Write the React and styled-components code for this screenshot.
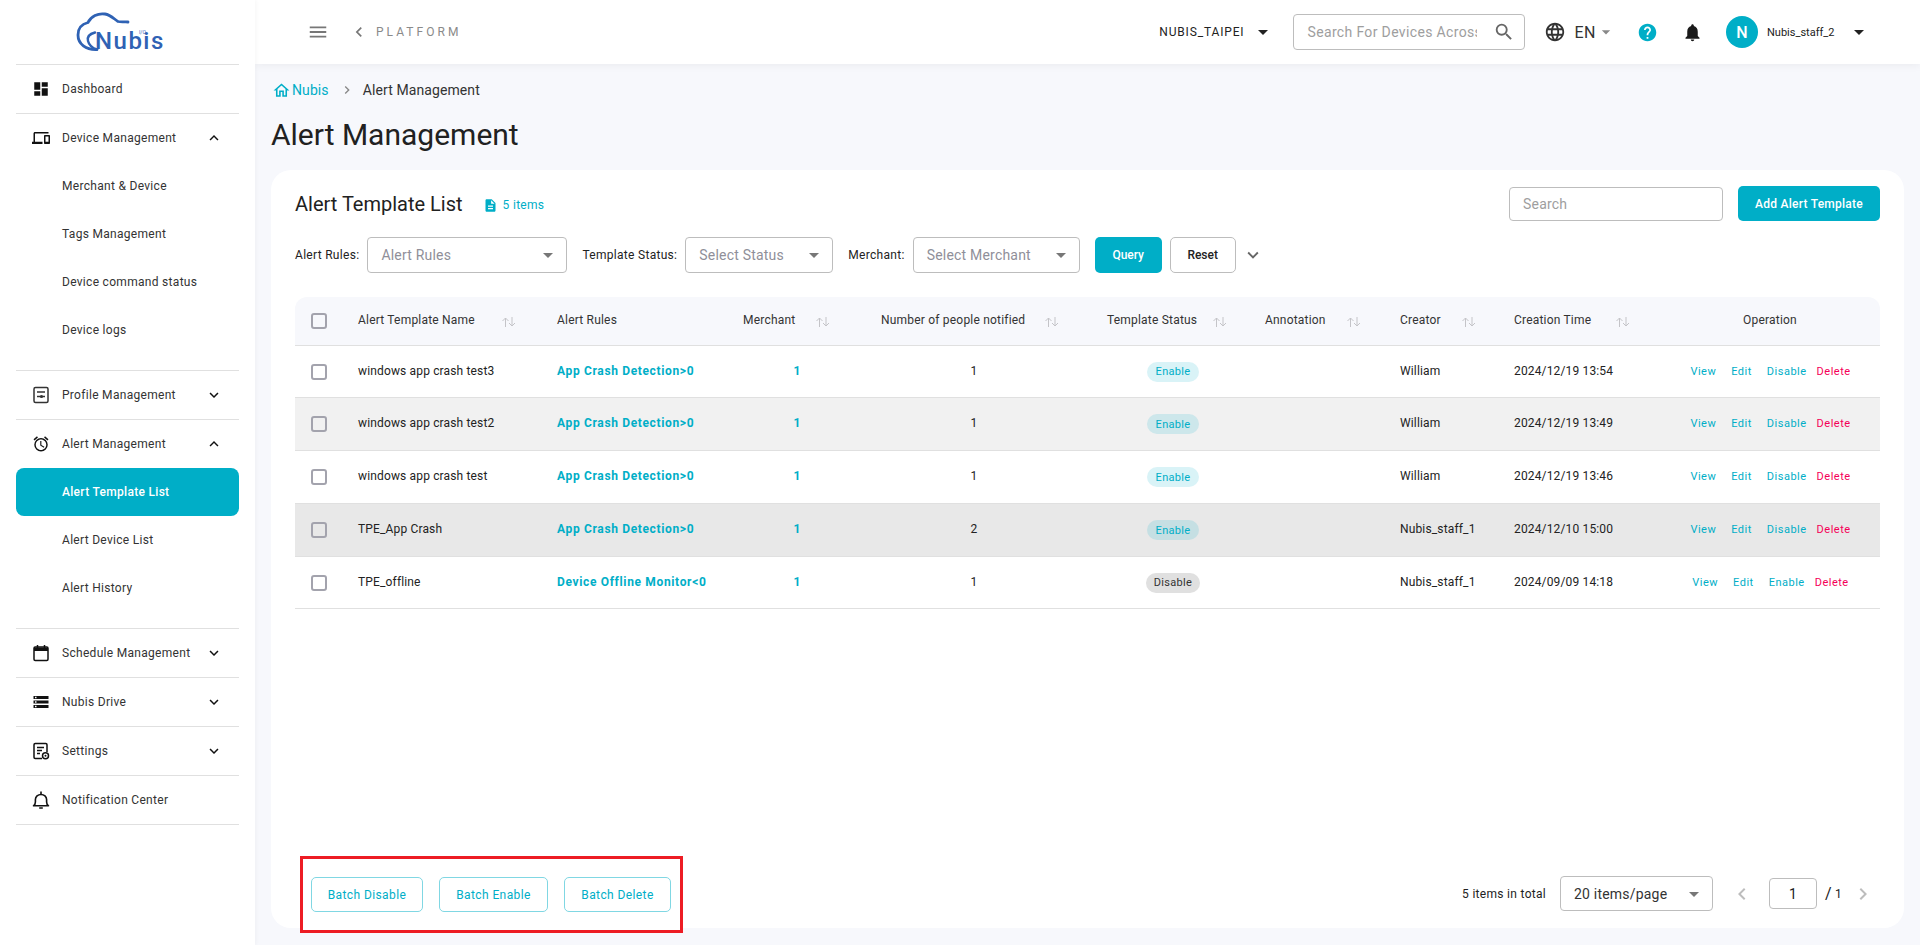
import React from 'react';
import styled, { createGlobalStyle } from 'styled-components';
import { MdDashboard, MdOutlineDevices, MdOutlineAlarm, MdStorage, MdExpandMore, MdExpandLess, MdMenu, MdChevronLeft, MdChevronRight, MdArrowDropDown, MdSearch, MdLanguage, MdHelp, MdNotifications, MdOutlineHome, MdDescription } from 'react-icons/md';

const TEAL = '#00aec7';

const Global = createGlobalStyle`
  html, body { margin: 0; padding: 0; height: 100%; background: #f7f8fc; }
  body { font-family: Roboto, "Liberation Sans", sans-serif; color: #212121; overflow: hidden; }
  * { box-sizing: border-box; }
`;

const Page = styled.div`display: flex; width: 1920px; height: 945px;`;

const Side = styled.aside`
  width: 255px; flex: none; background: #fff; padding: 0 16px;
  box-shadow: 1px 0 4px rgba(0,0,0,.04); z-index: 2;
`;
const LogoBox = styled.div`height: 65px; padding-left: 61px; padding-top: 12px; border-bottom: 1px solid #e0e0e0;`;
const NavGroup = styled.div`border-bottom: 1px solid #e0e0e0; padding-bottom: ${p => p.$open ? (p.$pad || 0) : 0}px;`;
const NavRow = styled.div`
  height: 48px; display: flex; align-items: center; padding: 0 16px 0 16px; gap: 12px;
  font-size: 12px; letter-spacing: .3px; color: #333;
  svg { flex: none; color: #111; }
  span { flex: 1; }
`;
const SubRow = styled.div`
  height: 48px; display: flex; align-items: center; padding-left: 46px; border-radius: 8px;
  font-size: 12px; letter-spacing: .3px;
  background: ${p => p.$active ? TEAL : 'transparent'};
  color: ${p => p.$active ? '#fff' : '#333'};
  font-weight: ${p => p.$active ? 500 : 400};
`;

const Main = styled.main`flex: 1; display: flex; flex-direction: column; min-width: 0;`;
const TopBar = styled.header`
  height: 64px; flex: none; background: #fff; display: flex; align-items: center;
  padding: 0 40px 0 52px; box-shadow: 0 2px 8px rgba(0,0,0,.05); color: #333;
`;
const MenuBtn = styled.div`display: flex; color: #777; margin-right: 20px;`;
const Platform = styled.div`font-size: 12px; letter-spacing: 3.05px; color: #8a8a8a; margin-left: 7px;`;
const Spacer = styled.div`flex: 1;`;
const Tenant = styled.div`font-size: 12px; letter-spacing: .85px; color: #222; display: flex; align-items: center; margin-right: 26px;`;
const TopSearch = styled.div`
  width: 232px; height: 36px; border: 1px solid #bdbdbd; border-radius: 4px; display: flex; align-items: center;
  padding: 0 9px 0 13px; font-size: 14px; color: #9e9e9e; letter-spacing: .35px; white-space: nowrap;
  span { width: 170px; overflow: hidden; flex: none; }
  svg { margin-left: auto; color: #666; flex: none; }
`;
const Lang = styled.div`display: flex; align-items: center; margin-left: 19px; font-size: 16px; letter-spacing: .5px; color: #333; gap: 8px; svg:last-child{ margin-left: -8px; color: #888; }`;
const Help = styled.div`display: flex; color: ${TEAL}; margin-left: 21px;`;
const Bell = styled.div`display: flex; color: #1a1a1a; margin-left: 24px;`;
const Avatar = styled.div`width: 32px; height: 32px; border-radius: 50%; background: ${TEAL}; color: #fff; display: flex; align-items: center; justify-content: center; font-size: 16px; font-weight: 500; margin-left: 23px;`;
const UserName = styled.div`font-size: 11px; color: #222; margin-left: 9px; display: flex; align-items: center; width: 113px; span { width: 80px; }`;

const Content = styled.div`flex: 1; display: flex; flex-direction: column; padding: 0 16px 17px;`;
const Crumbs = styled.nav`height: 36px; margin-top: 8px; display: flex; align-items: center; margin-left: 1px; font-size: 14px; color: #333; letter-spacing: .1px;`;
const CrumbLink = styled.span`display: inline-flex; align-items: center; color: ${TEAL}; gap: 1px;`;
const CrumbSep = styled.span`display: flex; color: #888; margin: 0 8px 0 10px;`;
const PageTitle = styled.h1`font-size: 30px; font-weight: 400; margin: 0; height: 62px; line-height: 54px; color: #212121;`;
const Card = styled.section`flex: 1; background: #fff; border-radius: 20px; padding: 16px 24px 0; display: flex; flex-direction: column;`;
const CardHead = styled.div`display: flex; align-items: center; height: 35px;`;
const CardTitle = styled.h2`font-size: 20px; font-weight: 400; margin: 0; color: #212121;`;
const Count = styled.div`display: flex; align-items: center; font-size: 12px; color: ${TEAL}; margin-left: 20px; gap: 5px; letter-spacing: .3px; margin-top: 3px;`;
const SearchInput = styled.div`width: 214px; height: 34px; border: 1px solid #bdbdbd; border-radius: 4px; display: flex; align-items: center; padding-left: 13px; font-size: 14px; color: #9e9e9e; margin-left: auto; letter-spacing: .2px;`;
const AddBtn = styled.div`width: 142px; height: 35px; border-radius: 5px; background: ${TEAL}; color: #fff; font-size: 12px; font-weight: 500; display: flex; align-items: center; justify-content: center; margin-left: 15px; letter-spacing: .25px;`;

const Filters = styled.div`display: flex; align-items: center; height: 36px; margin-top: 16px; font-size: 12px; color: #222;`;
const FilterLabel = styled.label`margin-right: 8px; letter-spacing: .3px;`;
const Select = styled.div`
  width: ${p => p.$w}px; height: ${p => p.$h || 36}px; border: 1px solid #bdbdbd; border-radius: 4px;
  display: flex; align-items: center; padding: 0 6px 0 ${p => p.$pl || 13}px; font-size: 14px; letter-spacing: .2px;
  color: ${p => p.$value ? '#333' : '#8f8f99'}; margin-right: ${p => p.$mr || 15}px; flex: none;
  svg { margin-left: auto; color: #777; }
`;
const Query = styled.div`width: 67px; height: 36px; margin-right: 8px; border-radius: 5px; background: ${TEAL}; color: #fff; font-size: 12px; font-weight: 500; display: flex; align-items: center; justify-content: center;`;
const Reset = styled.div`width: 66px; height: 36px; border: 1px solid #bdbdbd; border-radius: 5px; color: #222; font-size: 12px; font-weight: 500; display: flex; align-items: center; justify-content: center;`;
const More = styled.div`display: flex; color: #666; margin-left: 6px;`;

const Table = styled.div`margin-top: 24px;`;
const cols = '50px 200px 186px 138px 210px 174px 135px 114px 158px 220px';
const HeadRow = styled.div`
  display: grid; grid-template-columns: ${cols}; height: 49px; align-items: center; background: #f7f8fc;
  border-radius: 12px 12px 0 0; border-bottom: 1px solid #e0e0e0; font-size: 12px; color: #333; letter-spacing: .2px;
`;
const HeadCell = styled.div`display: flex; align-items: center; padding-left: ${p => p.$pl ?? 12}px; justify-content: ${p => p.$center ? 'center' : 'flex-start'}; padding-bottom: 2px;`;
const SortMark = styled.svg`margin-left: ${p => p.$gap}px; flex: none; margin-top: 4px;`;
const Row = styled.div`
  display: grid; grid-template-columns: ${cols}; height: ${p => p.$h}px; align-items: center; background: ${p => p.$bg};
  border-bottom: 1px solid #e0e0e0; font-size: 12px; color: #222; letter-spacing: .15px;
`;
const CheckCell = styled.div`padding-left: 16px; display: flex;`;
const Check = styled.div`width: 16px; height: 16px; border: 2px solid #a3a3ad; border-radius: 3px; background: #fff0;`;
const TextCell = styled.div`padding-left: ${p => p.$pl ?? 12}px; padding-bottom: 2px;`;
const RuleCell = styled(TextCell)`color: ${TEAL}; font-weight: 700; letter-spacing: .65px;`;
const NumCell = styled.div`text-align: center; padding-bottom: 2px; padding-right: ${p => p.$pr || 0}px; color: ${p => p.$teal ? TEAL : '#222'}; font-weight: ${p => p.$teal ? 700 : 400};`;
const StatusCell = styled.div`display: flex; justify-content: center; padding-left: 14px;`;
const Pill = styled.span`
  height: 20px; border-radius: 10px; padding: 0 ${p => p.$on ? 9 : 8}px; display: flex; align-items: center; font-size: 11px; letter-spacing: .3px;
  background: ${p => p.$on ? 'rgba(0,174,199,.15)' : '#e0e0e0'}; color: ${p => p.$on ? TEAL : '#333'};
`;
const Ops = styled.div`display: flex; justify-content: center; gap: 15px; font-size: 11px; letter-spacing: .5px; color: ${TEAL}; padding-left: 1px; padding-bottom: 1px;`;
const DeleteLink = styled.span`color: #f50057; margin-left: -5px;`;

const Footer = styled.div`margin-top: auto; display: flex; align-items: center; justify-content: space-between; margin-bottom: -5px; padding-left: 5px;`;
const BatchBox = styled.div`display: flex; align-items: center; gap: 16px; border: 3px solid #ed1c24; height: 77px; width: 383px; padding: 0 8px; background: #fff;`;
const BatchBtn = styled.div`height: 35px; width: ${p => p.$w}px; border: 1px solid #80d7e3; border-radius: 5px; color: ${TEAL}; font-size: 12px; letter-spacing: .4px; display: flex; align-items: center; justify-content: center;`;
const Pager = styled.div`display: flex; align-items: center; font-size: 12px; color: #222; margin-bottom: 2px; letter-spacing: .3px; padding-right: 5px;`;
const Total = styled.span`margin-right: 14px;`;
const PageArrow = styled.span`display: flex; color: #bdbdbd;`;
const PageInput = styled.div`width: 48px; height: 31px; border: 1px solid #bdbdbd; border-radius: 4px; display: flex; align-items: center; justify-content: center; font-size: 14px; margin: 0 8px 0 15px;`;
const Slash = styled.span`font-size: 16px; margin-right: 3px;`;
const PageTotal = styled.span`margin-right: 9px;`;

const ProfileIcon = (p) => (
  <svg width="18" height="18" viewBox="0 0 18 18" fill="none" {...p}>
    <rect x="2" y="1.5" width="14" height="15" rx="1.5" stroke="#333" strokeWidth="1.5" />
    <path d="M5 6h8M5 10.5h8" stroke="#333" strokeWidth="1.4" />
    <circle cx="9.5" cy="10.5" r="1.6" fill="#333" />
  </svg>
);
const CalIcon = (p) => (
  <svg width="18" height="18" viewBox="0 0 18 18" fill="none" {...p}>
    <rect x="2" y="3" width="14" height="13.5" rx="1.2" stroke="#111" strokeWidth="1.5" />
    <path d="M2 3.5h14V7H2z" fill="#111" />
    <path d="M5.5 1v3M12.5 1v3" stroke="#111" strokeWidth="1.5" />
  </svg>
);
const SettingsIcon = (p) => (
  <svg width="18" height="18" viewBox="0 0 18 18" fill="none" {...p}>
    <path d="M10 16.5H3.2c-.7 0-1.2-.5-1.2-1.2V2.7c0-.7.5-1.2 1.2-1.2h10.6c.7 0 1.2.5 1.2 1.2V10" stroke="#111" strokeWidth="1.5" />
    <path d="M5 5.5h7M5 8.5h5M5 11.5h3" stroke="#111" strokeWidth="1.3" />
    <circle cx="13.5" cy="13.8" r="3" fill="#fff" stroke="#111" strokeWidth="1.5" />
    <circle cx="13.5" cy="13.8" r="1" fill="#111" />
  </svg>
);
const BellOutline = (p) => (
  <svg width="18" height="18" viewBox="0 0 18 18" fill="none" {...p}>
    <path d="M1.5 14.8h15c-1.3-.9-1.9-1.9-1.9-3.8V8.6c0-2.9-2.5-5.1-5.6-5.1S3.4 5.7 3.4 8.6V11c0 1.9-.6 2.9-1.9 3.8z" stroke="#111" strokeWidth="1.6" strokeLinejoin="round" />
    <path d="M9 .6v3M7.2 17h3.6" stroke="#111" strokeWidth="1.6" />
  </svg>
);
const Logo = () => (
  <svg width="90" height="42" viewBox="0 0 90 42" style={{ overflow: 'visible' }}>
    <path d="M20 37.5 C 9 38 1 32 1 23 C 1 16 5 12 11 10.5 C 14 4 21 1 28 2 C 34 3 37 7 41 9.5 C 45 10.5 48 9.5 51 10" fill="none" stroke="#2f62b4" strokeWidth="2.8" strokeLinecap="round" />
    <path d="M18 20.5 C 12 22 10 25 11 29 C 12 33 15 36 20 37.5" fill="none" stroke="#2f62b4" strokeWidth="2.4" strokeLinecap="round" />
    <text x="18" y="37" fontFamily="Roboto, sans-serif" fontSize="24" fontWeight="500" letterSpacing="1.5" fill="#2f62b4">Nubis</text>
    <text x="62" y="22" fontFamily="Roboto, sans-serif" fontSize="5" fill="#2f62b4">I/O</text>
  </svg>
);

const Sort = ({ gap }) => (
  <SortMark $gap={gap} width="16" height="12" viewBox="0 0 16 12" fill="none" stroke="#c4c4c8" strokeWidth="1">
    <path d="M4.5 11V2M1.5 5l3-3 3 3M11 1v9M8 7l3 3 3-3" />
  </SortMark>
);

const nav = (Icon, label, open, children, pad) => ({ Icon, label, open, children, pad });
const navItems = [
  nav(MdDashboard, 'Dashboard'),
  nav(MdOutlineDevices, 'Device Management', true, ['Merchant & Device', 'Tags Management', 'Device command status', 'Device logs'], 16),
  nav(ProfileIcon, 'Profile Management', false),
  nav(MdOutlineAlarm, 'Alert Management', true, ['Alert Template List', 'Alert Device List', 'Alert History'], 16),
  nav(CalIcon, 'Schedule Management', false),
  nav(MdStorage, 'Nubis Drive', false),
  nav(SettingsIcon, 'Settings', false),
  nav(BellOutline, 'Notification Center'),
];

const rows = [
  { name: 'windows app crash test3', rule: 'App Crash Detection>0', n: 1, on: true, by: 'William', at: '2024/12/19 13:54', bg: '#fff', h: 52 },
  { name: 'windows app crash test2', rule: 'App Crash Detection>0', n: 1, on: true, by: 'William', at: '2024/12/19 13:49', bg: '#f1f1f1', h: 53 },
  { name: 'windows app crash test', rule: 'App Crash Detection>0', n: 1, on: true, by: 'William', at: '2024/12/19 13:46', bg: '#fff', h: 53 },
  { name: 'TPE_App Crash', rule: 'App Crash Detection>0', n: 2, on: true, by: 'Nubis_staff_1', at: '2024/12/10 15:00', bg: '#e8e8e8', h: 53 },
  { name: 'TPE_offline', rule: 'Device Offline Monitor<0', n: 1, on: false, by: 'Nubis_staff_1', at: '2024/09/09 14:18', bg: '#fff', h: 52 },
];

export default function App() {
  return (
    <Page>
      <Global />
      <Side>
        <LogoBox><Logo /></LogoBox>
        {navItems.map(({ Icon, label, open, children, pad }) => (
          <NavGroup key={label} $open={open} $pad={pad}>
            <NavRow>
              <Icon size={18} />
              <span>{label}</span>
              {open === true && <MdExpandLess size={18} />}
              {open === false && <MdExpandMore size={18} />}
            </NavRow>
            {children && children.map(c => <SubRow key={c} $active={c === 'Alert Template List'}>{c}</SubRow>)}
          </NavGroup>
        ))}
      </Side>
      <Main>
        <TopBar>
          <MenuBtn><MdMenu size={22} /></MenuBtn>
          <MdChevronLeft size={20} color="#777" />
          <Platform>PLATFORM</Platform>
          <Spacer />
          <Tenant>NUBIS_TAIPEI<MdArrowDropDown size={24} style={{ marginLeft: 7, marginRight: -8 }} /></Tenant>
          <TopSearch><span>Search For Devices Across</span><MdSearch size={22} /></TopSearch>
          <Lang><MdLanguage size={22} />EN<MdArrowDropDown size={20} /></Lang>
          <Help><MdHelp size={21} /></Help>
          <Bell><MdNotifications size={21} /></Bell>
          <Avatar>N</Avatar>
          <UserName><span>Nubis_staff_2</span><MdArrowDropDown size={24} /></UserName>
        </TopBar>
        <Content>
          <Crumbs>
            <CrumbLink><MdOutlineHome size={19} />Nubis</CrumbLink>
            <CrumbSep><MdChevronRight size={16} /></CrumbSep>
            Alert Management
          </Crumbs>
          <PageTitle>Alert Management</PageTitle>
          <Card>
            <CardHead>
              <CardTitle>Alert Template List</CardTitle>
              <Count><MdDescription size={15} />5 items</Count>
              <SearchInput>Search</SearchInput>
              <AddBtn>Add Alert Template</AddBtn>
            </CardHead>
            <Filters>
              <FilterLabel>Alert Rules:</FilterLabel>
              <Select $w={200}>Alert Rules<MdArrowDropDown size={24} /></Select>
              <FilterLabel>Template Status:</FilterLabel>
              <Select $w={148}>Select Status<MdArrowDropDown size={24} /></Select>
              <FilterLabel>Merchant:</FilterLabel>
              <Select $w={167}>Select Merchant<MdArrowDropDown size={24} /></Select>
              <Query>Query</Query>
              <Reset>Reset</Reset>
              <More><MdExpandMore size={22} /></More>
            </Filters>
            <Table>
              <HeadRow>
                <CheckCell><Check /></CheckCell>
                <HeadCell $pl={13}>Alert Template Name<Sort gap={26} /></HeadCell>
                <HeadCell>Alert Rules</HeadCell>
                <HeadCell>Merchant<Sort gap={20} /></HeadCell>
                <HeadCell>Number of people notified<Sort gap={19} /></HeadCell>
                <HeadCell $pl={28}>Template Status<Sort gap={15} /></HeadCell>
                <HeadCell>Annotation<Sort gap={20} /></HeadCell>
                <HeadCell>Creator<Sort gap={20} /></HeadCell>
                <HeadCell>Creation Time<Sort gap={24} /></HeadCell>
                <HeadCell $pl={0} $center>Operation</HeadCell>
              </HeadRow>
              {rows.map(r => (
                <Row key={r.name} $bg={r.bg} $h={r.h}>
                  <CheckCell><Check /></CheckCell>
                  <TextCell $pl={13}>{r.name}</TextCell>
                  <RuleCell>{r.rule}</RuleCell>
                  <NumCell $teal $pr={6}>1</NumCell>
                  <NumCell>{r.n}</NumCell>
                  <StatusCell><Pill $on={r.on}>{r.on ? 'Enable' : 'Disable'}</Pill></StatusCell>
                  <div />
                  <TextCell>{r.by}</TextCell>
                  <TextCell>{r.at}</TextCell>
                  <Ops><span>View</span><span>Edit</span><span>{r.on ? 'Disable' : 'Enable'}</span><DeleteLink>Delete</DeleteLink></Ops>
                </Row>
              ))}
            </Table>
            <Footer>
              <BatchBox>
                <BatchBtn $w={112}>Batch Disable</BatchBtn>
                <BatchBtn $w={109}>Batch Enable</BatchBtn>
                <BatchBtn $w={107}>Batch Delete</BatchBtn>
              </BatchBox>
              <Pager>
                <Total>5 items in total</Total>
                <Select $w={153} $h={35} $value $mr={17} $pl={13}>20 items/page<MdArrowDropDown size={24} /></Select>
                <PageArrow><MdChevronLeft size={24} /></PageArrow>
                <PageInput>1</PageInput>
                <Slash>/</Slash>
                <PageTotal>1</PageTotal>
                <PageArrow><MdChevronRight size={24} /></PageArrow>
              </Pager>
            </Footer>
          </Card>
        </Content>
      </Main>
    </Page>
  );
}
